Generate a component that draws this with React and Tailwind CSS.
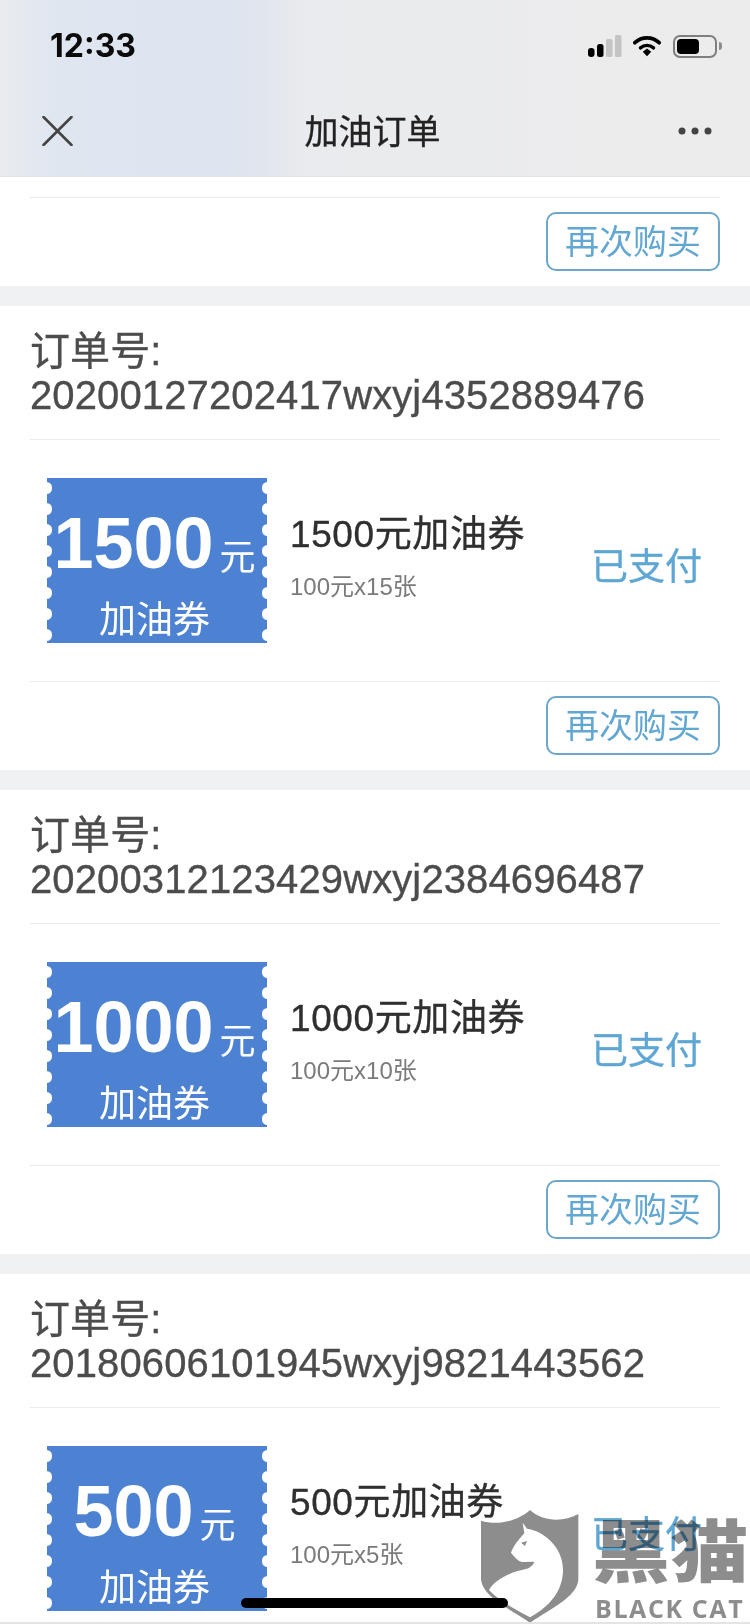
import React from "react";

const orders = [
  { no: "20200127202417wxyj4352889476", amount: "1500", detail: "100元x15张" },
  { no: "20200312123429wxyj2384696487", amount: "1000", detail: "100元x10张" },
  { no: "20180606101945wxyj9821443562", amount: "500", detail: "100元x5张" },
];

const notches = [0, 1, 2, 3, 4, 5, 6, 7];

function Notches({ side }) {
  return (
    <div className={`absolute top-[4px] flex flex-col gap-[9px] blur-[0.6px] ${side === "left" ? "left-[-6px]" : "right-[-6px]"}`}>
      {notches.map((n) => (
        <div key={n} className="w-[11px] h-[12px] rounded-full bg-white" />
      ))}
    </div>
  );
}

function Ticket({ amount }) {
  return (
    <div className="relative w-[220px] h-[165px] overflow-hidden bg-[#4c82d1] text-white flex flex-col items-center">
      <Notches side="left" />
      <Notches side="right" />
      <div className="flex items-baseline h-[124px] pt-[29px] mr-[5px]">
        <span className="text-[72px] leading-[72px] font-bold">{amount}</span>
        <span className="text-[36px] leading-[36px] ml-[6px] translate-y-[2px]">元</span>
      </div>
      <div className="text-[37px] leading-[44px] -ml-[5px]">加油券</div>
    </div>
  );
}

function Footer() {
  return (
    <div className="pb-[15px]">
      <div className="border-t border-[#ebebeb] pt-[14px] flex justify-end">
        <button className="w-[174px] h-[59px] rounded-[10px] border-2 border-[#6ca6cb] text-[34px] leading-none text-[#62a7d2] bg-white">
          再次购买
        </button>
      </div>
    </div>
  );
}

function OrderCard({ order, showFooter }) {
  return (
    <section className="bg-white px-[30px]">
      <div className="pt-[23px] pb-[22px] text-[40px] leading-[44px] text-[#4c4c4c] tracking-[0.12px] [-webkit-text-stroke:0.35px_#4c4c4c]">
        <div>订单号:</div>
        <div>{order.no}</div>
      </div>
      <div className="border-t border-[#ebebeb] h-[242px] pl-[17px] pr-[18px] flex items-center justify-between">
        <div className="flex items-center">
          <Ticket amount={order.amount} />
          <div className="ml-[23px] mb-[6px]">
            <div className="text-[37px] leading-[44px] text-[#2f2f2f] tracking-[0.6px] [-webkit-text-stroke:0.35px_#2f2f2f]">{order.amount}元加油券</div>
            <div className="text-[24px] leading-[30px] text-[#7b7b7b] mt-[15px]">{order.detail}</div>
          </div>
        </div>
        <div className="text-[37px] leading-none text-[#5ea6d3] mt-[14px] [-webkit-text-stroke:0.35px_#5ea6d3]">已支付</div>
      </div>
      {showFooter && <Footer />}
    </section>
  );
}

function StatusIcons() {
  return (
    <div className="flex items-center">
      <svg width="34" height="22" viewBox="0 0 34 22">
        <rect x="0" y="13" width="6.5" height="9" rx="3" fill="#000" />
        <rect x="9" y="9" width="6.5" height="13" rx="2.5" fill="#000" />
        <rect x="18" y="4" width="6.5" height="18" rx="1.5" fill="#c4c4c4" />
        <rect x="27" y="0" width="6.5" height="22" rx="1.5" fill="#c4c4c4" />
      </svg>
      <svg width="28" height="24" viewBox="0 0 30 24" className="ml-[11px]">
        <path d="M2 8.5 C9.5 1.5 20.5 1.5 28 8.5" fill="none" stroke="#000" strokeWidth="4" strokeLinecap="round" />
        <path d="M8 14 C12 10.5 18 10.5 22 14" fill="none" stroke="#000" strokeWidth="3.6" strokeLinecap="round" />
        <path d="M10.5 18.2 L15 14.8 L19.5 18.2 L15 23 Z" fill="#000" />
      </svg>
      <div className="ml-[12px] w-[44px] h-[23px] rounded-[7px] border-2 border-[#7f7f7f] p-[2px]">
        <div className="w-[22px] h-full rounded-[4px] bg-black" />
      </div>
      <div className="ml-[2px] w-[3px] h-[8px] rounded-r-full bg-[#8c8c8c]" />
    </div>
  );
}

function Header() {
  return (
    <header className="h-[177px] bg-[linear-gradient(90deg,#e9ebef_0%,#dfe6f0_8%,#dce5f0_28%,#e0e5ee_34%,#eaebee_41%,#ececec_100%)] border-b border-[#e3e3e3]">
      <div className="h-[88px] pt-[29px] pl-[50px] pr-[28px] flex items-start justify-between">
        <span className="text-[32px] leading-[34px] font-bold text-[#0a0a0a] font-['Inter']">12:33</span>
        <div className="pt-[5px]">
          <StatusIcons />
        </div>
      </div>
      <div className="h-[88px] pl-[42px] pr-[38px] flex items-center justify-between relative">
        <svg width="31" height="30" viewBox="0 0 31 30" className="-mt-[2px]">
          <path d="M1.5 1 L29.5 29 M29.5 1 L1.5 29" stroke="#444" strokeWidth="2.6" strokeLinecap="round" />
        </svg>
        <div className="absolute left-0 right-0 top-[20px] text-center text-[34px] leading-[48px] text-[#222] pr-[5px] [-webkit-text-stroke:0.35px_#222]">加油订单</div>
        <svg width="34" height="8" viewBox="0 0 34 8" className="-mt-[2px]">
          <circle cx="4" cy="4" r="3.5" fill="#444" />
          <circle cx="17" cy="4" r="3.5" fill="#444" />
          <circle cx="30" cy="4" r="3.5" fill="#444" />
        </svg>
      </div>
    </header>
  );
}

function Watermark() {
  return (
    <div className="absolute left-[475px] top-[1500px] w-[275px] h-[124px] mix-blend-multiply">
      <svg width="110" height="124" viewBox="0 0 330 372" className="absolute left-0 top-0">
        <path
          fillRule="evenodd"
          fill="#8d8d8d"
          d="M18 62 C70 78 130 62 165 30 C200 62 260 70 310 42 L310 240 C305 290 230 325 165 368 C100 325 25 290 18 240 Z
             M143 68 L156 86 C205 92 262 140 264 205 C266 270 225 320 165 352 C125 330 75 305 42 270 C60 238 110 215 150 208 C165 204 175 195 178 185 L140 186 C128 182 118 170 108 158 C115 140 125 125 148 100 Z
             M138 128 L156 123 L150 138 Z"
        />
      </svg>
      <div className="absolute left-[117px] top-[3px] text-[78px] leading-[90px] font-black text-[#8d8d8d] tracking-[0.5px] origin-bottom scale-y-[0.88]">黑猫</div>
      <div className="absolute left-[120px] top-[94px] text-[25px] leading-[28px] font-bold text-[#8d8d8d] tracking-[1.6px] whitespace-nowrap font-['Open_Sans']">BLACK CAT</div>
    </div>
  );
}

export default function App() {
  return (
    <div className="relative w-[750px] h-[1624px] overflow-hidden bg-[#eff1f3] font-['Liberation_Sans','Noto_Sans_CJK_SC',sans-serif]">
      <Header />
      <section className="bg-white px-[30px] pt-[20px]">
        <Footer />
      </section>
      <div className="flex flex-col gap-[20px] mt-[20px]">
        {orders.map((order, i) => (
          <OrderCard key={order.no} order={order} showFooter={i < orders.length - 1} />
        ))}
      </div>
      <div className="absolute left-[241px] top-[1598px] w-[267px] h-[10px] rounded-full bg-black" />
      <Watermark />
      <div className="absolute left-0 right-0 bottom-0 h-[2px] bg-[#e4e4e4]" />
    </div>
  );
}
